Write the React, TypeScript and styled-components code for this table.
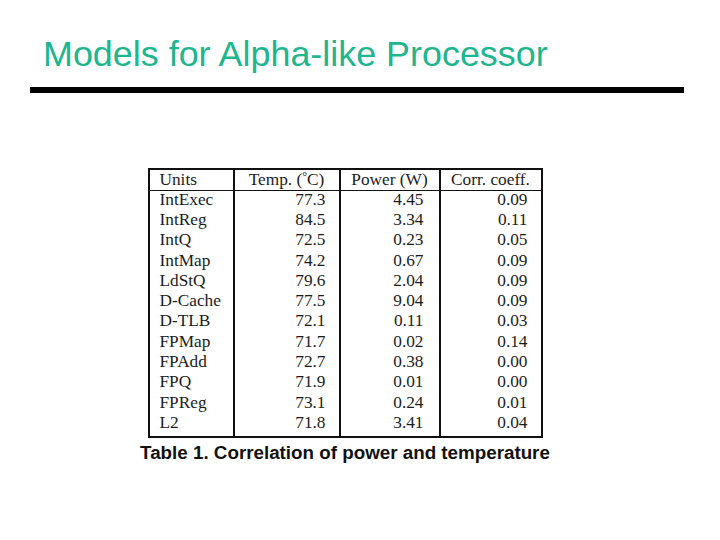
import React from "react";
import styled, { createGlobalStyle } from "styled-components";

const Global = createGlobalStyle`
  html, body { margin: 0; padding: 0; background: #ffffff; }
  body { width: 720px; height: 540px; overflow: hidden; }
`;

const Slide = styled.div`
  width: 720px;
  height: 540px;
  background: #ffffff;
  display: flex;
  flex-direction: column;
`;

const Title = styled.h1`
  margin: 36px 0 0 43px;
  font-family: "Liberation Sans", Arial, sans-serif;
  font-weight: normal;
  font-size: 35.9px;
  line-height: 36px;
  color: #1db68e;
  white-space: nowrap;
`;

const Rule = styled.div`
  margin: 15px 0 0 30px;
  width: 654px;
  height: 6px;
  background: #000000;
`;

const Figure = styled.figure`
  margin: 75px 0 0 139px;
  display: flex;
  flex-direction: column;
  align-items: center;
  width: 412px;
`;

const Table = styled.table`
  border-collapse: collapse;
  table-layout: fixed;
  border: 2px solid #111;
  font-family: "Liberation Serif", "Times New Roman", serif;
  font-size: 17.3px;
  color: #1c1c1c;
`;

const Col = styled.col<{ $w: number }>`
  width: ${(p) => p.$w}px;
`;

const HeadRow = styled.tr`
  height: 21px;
  border-bottom: 1.5px solid #111;
`;

const Row = styled.tr`
  height: 20.3px;
  &:last-child {
    height: 23.3px;
  }
  &:last-child > td {
    padding-bottom: 3px;
  }
`;

const Th = styled.th<{ $left?: boolean }>`
  font-weight: normal;
  padding: ${(p) => (p.$left ? "0 0 0 10px" : "0")};
  text-align: ${(p) => (p.$left ? "left" : "center")};
  vertical-align: middle;
  border-left: 2px solid #111;
  line-height: 18px;
  white-space: nowrap;
  &:first-child { border-left: none; }
`;

const Td = styled.td<{ $left?: boolean; $pr?: number }>`
  padding-top: 0;
  padding-left: ${(p) => (p.$left ? 10 : 0)}px;
  padding-right: ${(p) => (p.$left ? 0 : p.$pr ?? 13)}px;
  text-align: ${(p) => (p.$left ? "left" : "right")};
  vertical-align: middle;
  border-left: 2px solid #111;
  line-height: 18px;
  white-space: nowrap;
  &:first-child { border-left: none; }
`;

const Caption = styled.figcaption`
  margin-top: 4px;
  font-family: "Liberation Sans", Arial, sans-serif;
  font-weight: bold;
  font-size: 18.8px;
  line-height: 22px;
  color: #111;
  white-space: nowrap;
`;

const Deg = styled.sup`
  font-size: 0.7em;
  line-height: 0;
  vertical-align: 0.45em;
`;

const rows: [string, string, string, string][] = [
  ["IntExec", "77.3", "4.45", "0.09"],
  ["IntReg", "84.5", "3.34", "0.11"],
  ["IntQ", "72.5", "0.23", "0.05"],
  ["IntMap", "74.2", "0.67", "0.09"],
  ["LdStQ", "79.6", "2.04", "0.09"],
  ["D-Cache", "77.5", "9.04", "0.09"],
  ["D-TLB", "72.1", "0.11", "0.03"],
  ["FPMap", "71.7", "0.02", "0.14"],
  ["FPAdd", "72.7", "0.38", "0.00"],
  ["FPQ", "71.9", "0.01", "0.00"],
  ["FPReg", "73.1", "0.24", "0.01"],
  ["L2", "71.8", "3.41", "0.04"],
];

export default function App() {
  return (
    <Slide>
      <Global />
      <Title>Models for Alpha-like Processor</Title>
      <Rule />
      <Figure>
        <Table>
          <colgroup>
            <Col $w={85} />
            <Col $w={106} />
            <Col $w={100} />
            <Col $w={102} />
          </colgroup>
          <thead>
            <HeadRow>
              <Th $left>Units</Th>
              <Th>
                Temp. (<Deg>°</Deg>C)
              </Th>
              <Th>Power (W)</Th>
              <Th>Corr. coeff.</Th>
            </HeadRow>
          </thead>
          <tbody>
            {rows.map((r) => (
              <Row key={r[0]}>
                <Td $left>{r[0]}</Td>
                <Td $pr={13}>{r[1]}</Td>
                <Td $pr={15}>{r[2]}</Td>
                <Td $pr={13}>{r[3]}</Td>
              </Row>
            ))}
          </tbody>
        </Table>
        <Caption>Table 1. Correlation of power and temperature</Caption>
      </Figure>
    </Slide>
  );
}
